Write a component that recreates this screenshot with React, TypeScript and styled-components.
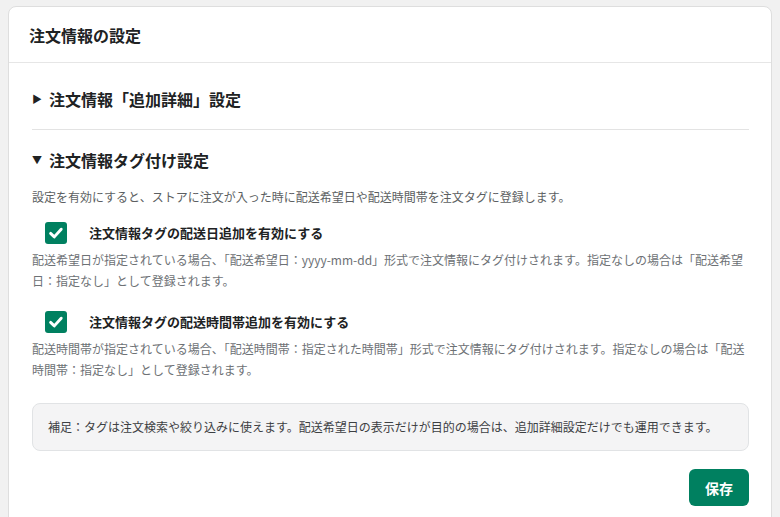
import React, { useState } from "react";
import styled, { createGlobalStyle } from "styled-components";

const GlobalStyle = createGlobalStyle`
  html, body {
    margin: 0;
    padding: 0;
    background: #f1f1f1;
    font-family: "Noto Sans CJK JP", "Noto Sans", sans-serif;
    color: #202223;
  }
`;

interface ToggleOption {
  id: string;
  label: string;
  help: string;
}

const options: ToggleOption[] = [
  {
    id: "date",
    label: "注文情報タグの配送日追加を有効にする",
    help: "配送希望日が指定されている場合、「配送希望日：yyyy-mm-dd」形式で注文情報にタグ付けされます。指定なしの場合は「配送希望日：指定なし」として登録されます。",
  },
  {
    id: "time",
    label: "注文情報タグの配送時間帯追加を有効にする",
    help: "配送時間帯が指定されている場合、「配送時間帯：指定された時間帯」形式で注文情報にタグ付けされます。指定なしの場合は「配送時間帯：指定なし」として登録されます。",
  },
];

const App: React.FC = () => {
  const [detailOpen, setDetailOpen] = useState(false);
  const [tagOpen, setTagOpen] = useState(true);
  const [checked, setChecked] = useState<Record<string, boolean>>({ date: true, time: true });

  return (
    <>
      <GlobalStyle />
      <Page>
        <Card>
          <CardHeader>
            <Title>注文情報の設定</Title>
          </CardHeader>
          <CardBody>
            <Section divided>
              <Summary onClick={() => setDetailOpen(!detailOpen)}>
                <Arrow>{detailOpen ? "▼" : "▶"}</Arrow>
                注文情報「追加詳細」設定
              </Summary>
            </Section>
            <Section>
              <Summary onClick={() => setTagOpen(!tagOpen)}>
                <Arrow>{tagOpen ? "▼" : "▶"}</Arrow>
                注文情報タグ付け設定
              </Summary>
              {tagOpen && (
                <>
                  <Description>
                    設定を有効にすると、ストアに注文が入った時に配送希望日や配送時間帯を注文タグに登録します。
                  </Description>
                  {options.map((opt) => (
                    <Option key={opt.id}>
                      <CheckRow onClick={() => setChecked({ ...checked, [opt.id]: !checked[opt.id] })}>
                        <CheckBox isChecked={checked[opt.id]}>
                          {checked[opt.id] && (
                            <svg width="16" height="16" viewBox="0 0 16 16">
                              <path d="M2.6 8.4 L6.3 11.9 L13.2 4.2" fill="none" stroke="#fff" strokeWidth="2.9" strokeLinecap="round" strokeLinejoin="round" />
                            </svg>
                          )}
                        </CheckBox>
                        <CheckLabel>{opt.label}</CheckLabel>
                      </CheckRow>
                      <HelpText>{opt.help}</HelpText>
                    </Option>
                  ))}
                  <Note>補足：タグは注文検索や絞り込みに使えます。配送希望日の表示だけが目的の場合は、追加詳細設定だけでも運用できます。</Note>
                </>
              )}
              <Actions>
                <SaveButton>保存</SaveButton>
              </Actions>
            </Section>
          </CardBody>
        </Card>
      </Page>
    </>
  );
};

const Page = styled.div`
  padding: 6px 8px 0 8px;
  height: 517px;
  box-sizing: border-box;
  overflow: hidden;
`;

const Card = styled.div`
  background: #ffffff;
  border: 1px solid #dedede;
  border-radius: 8px;
  width: 764px;
  box-sizing: border-box;
  min-height: 560px;
`;

const CardHeader = styled.div`
  height: 56px;
  display: flex;
  align-items: center;
  padding: 0 20px;
  border-bottom: 1px solid #e6e6e6;
  box-sizing: border-box;
`;

const Title = styled.h2`
  margin: 0;
  font-size: 16px;
  font-weight: 700;
  color: #202223;
`;

const CardBody = styled.div`
  padding: 24px 22px 24px 23px;
`;

const Section = styled.div<{ divided?: boolean }>`
  padding-bottom: ${({ divided }) => (divided ? "18px" : "0")};
  margin-bottom: ${({ divided }) => (divided ? "18px" : "0")};
  border-bottom: ${({ divided }) => (divided ? "1px solid #e3e3e3" : "none")};
`;

const Summary = styled.div`
  display: flex;
  align-items: center;
  font-size: 16px;
  font-weight: 700;
  line-height: 24px;
  color: #202223;
  cursor: pointer;
`;

const Arrow = styled.span`
  font-size: 10px;
  width: 17px;
  display: inline-block;
  color: #202223;
`;

const Description = styled.p`
  margin: 16px 0 0;
  font-size: 12px;
  line-height: 18px;
  color: #5c5f62;
`;

const Option = styled.div`
  margin-top: 16px;
  & + & {
    margin-top: 20px;
  }
`;

const CheckRow = styled.label`
  display: flex;
  align-items: center;
  cursor: pointer;
`;

const CheckBox = styled.span<{ isChecked: boolean }>`
  width: 22px;
  height: 22px;
  margin-left: 13px;
  border-radius: 3px;
  display: flex;
  align-items: center;
  justify-content: center;
  box-sizing: border-box;
  background: ${({ isChecked }) => (isChecked ? "#008060" : "#ffffff")};
  border: ${({ isChecked }) => (isChecked ? "none" : "1px solid #8c9196")};
`;

const CheckLabel = styled.span`
  margin-left: 22px;
  font-size: 13px;
  line-height: 20px;
  font-weight: 700;
  color: #202223;
`;

const HelpText = styled.p`
  margin: 6px 0 0;
  font-size: 12px;
  line-height: 20.5px;
  color: #6d7175;
`;

const Note = styled.div`
  margin-top: 23px;
  padding: 14px 15px;
  background: #f4f4f5;
  border: 1px solid #e1e3e5;
  border-radius: 8px;
  font-size: 12px;
  line-height: 18px;
  color: #3d4043;
`;

const Actions = styled.div`
  display: flex;
  justify-content: flex-end;
  margin-top: 18px;
`;

const SaveButton = styled.button`
  height: 37px;
  padding: 0 16px;
  border: none;
  border-radius: 6px;
  background: #008060;
  color: #ffffff;
  font-family: inherit;
  font-size: 14px;
  font-weight: 700;
  cursor: pointer;
`;

export default App;
